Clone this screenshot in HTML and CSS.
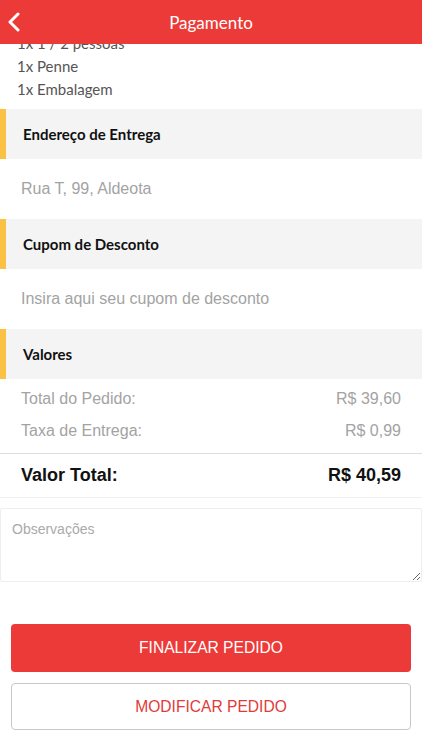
FILE: index.html
```html
<!DOCTYPE html>
<html lang="pt-BR">
<head>
  <meta charset="UTF-8">
  <title>Pagamento</title>
  <link rel="stylesheet" href="styles.css">
</head>
<body>
  <header class="topbar">
    <svg class="back" width="14" height="20" viewBox="0 0 14 20">
      <path d="M11 2 L3 10 L11 18" fill="none" stroke="#fff" stroke-width="3" stroke-linecap="round" stroke-linejoin="round"/>
    </svg>
    <h1>Pagamento</h1>
  </header>

  <main>
    <ul class="items">
      <li>1x 1 / 2 pessoas</li>
      <li>1x Penne</li>
      <li>1x Embalagem</li>
    </ul>

    <div class="section-title">Endereço de Entrega</div>
    <div class="field">Rua T, 99, Aldeota</div>

    <div class="section-title">Cupom de Desconto</div>
    <div class="field">Insira aqui seu cupom de desconto</div>

    <div class="section-title">Valores</div>
    <div class="values">
      <div class="row"><span>Total do Pedido:</span><span>R$ 39,60</span></div>
      <div class="row"><span>Taxa de Entrega:</span><span>R$ 0,99</span></div>
    </div>
    <div class="total"><span>Valor Total:</span><span>R$ 40,59</span></div>

    <textarea class="notes" placeholder="Observações"></textarea>

    <div class="actions">
      <button class="btn primary">FINALIZAR PEDIDO</button>
      <button class="btn secondary">MODIFICAR PEDIDO</button>
    </div>
  </main>
</body>
</html>
```

FILE: styles.css
```css
body {
  margin: 0;
  background: #fff;
  font-family: "Liberation Sans", Arial, sans-serif;
}

.topbar {
  position: fixed;
  top: 0;
  left: 0;
  right: 0;
  height: 44px;
  background: #ec3a38;
  display: flex;
  align-items: center;
  justify-content: center;
  z-index: 2;
}

.topbar h1 {
  margin: 0;
  color: #fff;
  font-family: Lato, sans-serif;
  font-weight: normal;
  font-size: 17px;
}

.back {
  position: absolute;
  left: 7px;
  top: 12px;
}

.items {
  list-style: none;
  margin: 0;
  padding: 32px 17px 8px;
  font-family: Lato, sans-serif;
  font-size: 15px;
  color: #555;
}

.items li {
  line-height: 23px;
}

.section-title {
  height: 50px;
  display: flex;
  align-items: center;
  padding-left: 17px;
  background: #f4f4f4;
  border-left: 6px solid #fbc144;
  box-sizing: border-box;
  font-family: Lato, sans-serif;
  font-weight: bold;
  font-size: 15px;
  color: #111;
}

.field {
  height: 60px;
  display: flex;
  align-items: center;
  padding-left: 21px;
  font-size: 16px;
  color: #a3a3a3;
}

.values {
  padding: 4px 21px 6px;
  border-bottom: 1px solid #dedede;
}

.row {
  display: flex;
  justify-content: space-between;
  height: 32px;
  align-items: center;
  font-size: 16px;
  color: #a3a3a3;
}

.total {
  display: flex;
  justify-content: space-between;
  align-items: center;
  height: 43px;
  padding: 0 21px;
  border-bottom: 1px solid #f0f0f0;
  font-size: 18px;
  font-weight: bold;
  color: #111;
}

.notes {
  display: block;
  width: 100%;
  height: 74px;
  margin: 10px 0 0;
  box-sizing: border-box;
  border: 1px solid #eee;
  border-radius: 2px;
  padding: 12px 11px;
  font-family: "Liberation Sans", Arial, sans-serif;
  font-size: 14px;
  outline: none;
}

.notes::placeholder {
  color: #aaa;
}

.actions {
  display: flex;
  flex-direction: column;
  gap: 11px;
  padding: 42px 11px 0;
}

.btn {
  height: 48px;
  border-radius: 4px;
  font-family: "Liberation Sans", Arial, sans-serif;
  font-size: 15.6px;
  cursor: pointer;
}

.primary {
  background: #ec3a38;
  border: none;
  color: #fff;
}

.secondary {
  height: 47px;
  background: #fff;
  border: 1px solid #c8c8c8;
  color: #e23a38;
}
```
